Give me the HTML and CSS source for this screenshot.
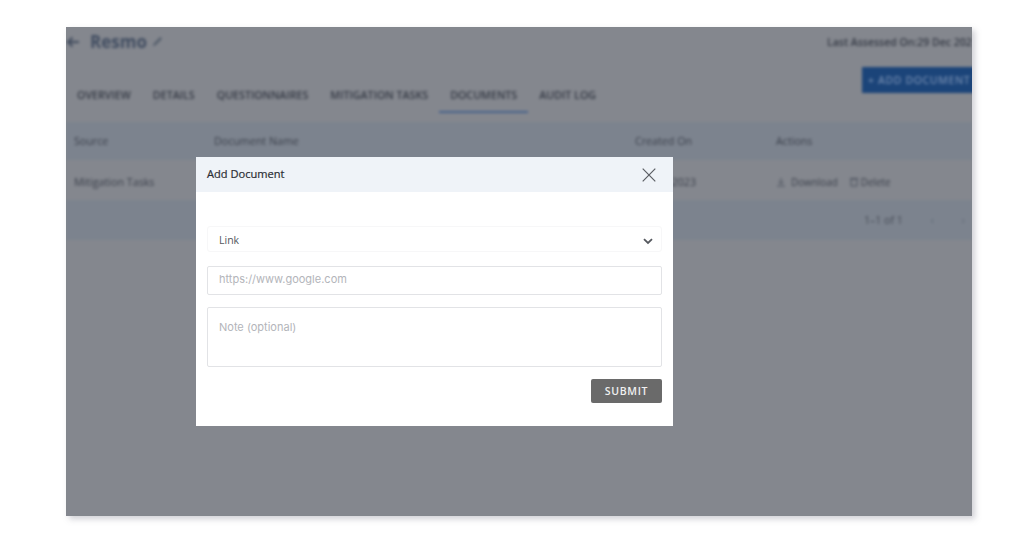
FILE: index.html
```html
<!DOCTYPE html>
<html lang="en">
<head>
<meta charset="utf-8">
<title>Add Document</title>
<link rel="stylesheet" href="styles.css">
</head>
<body>
<main class="frame">
  <div class="page">
    <header class="top">
      <div class="title-group">
        <svg class="back" viewBox="0 0 14 12" width="14" height="12"><path d="M13 6H2M6.500 1.500 2 6l4.500 4.500" fill="none" stroke="#3f4a5c" stroke-width="1.800"/></svg>
        <h1 class="title">Resmo</h1>
        <svg class="edit" viewBox="0 0 12 12" width="11" height="11"><path d="M1.500 10.500 3 8l6-6 1 1-6 6z" fill="none" stroke="#4f5968" stroke-width="1.200"/></svg>
      </div>
      <div class="assessed">Last Assessed On:29 Dec 2023</div>
    </header>
    <div class="tabs-row">
      <nav class="tabs">
        <span class="tab">OVERVIEW</span>
        <span class="tab">DETAILS</span>
        <span class="tab">QUESTIONNAIRES</span>
        <span class="tab">MITIGATION TASKS</span>
        <span class="tab tab-active">DOCUMENTS</span>
        <span class="tab">AUDIT LOG</span>
      </nav>
      <button class="add-btn">+ ADD DOCUMENT</button>
    </div>
    <section class="table">
      <div class="row row-head">
        <span class="c1">Source</span><span class="c2">Document Name</span><span class="c3">Created On</span><span class="c4">Actions</span>
      </div>
      <div class="row row-body">
        <span class="c1">Mitigation Tasks</span><span class="c2"></span><span class="c3">29 Dec 2023</span>
        <span class="c4 actions">
          <span class="action">
            <svg viewBox="0 0 10 10" width="10" height="10"><path d="M5 1v6M2.500 4.500 5 7l2.500-2.500M1 9h8" fill="none" stroke="#4a505c" stroke-width="1"/></svg>Download
          </span>
          <span class="action action-delete">
            <svg viewBox="0 0 8 10" width="8" height="10"><path d="M1 2h6v7H1zM0 1.500h8" fill="none" stroke="#4a505c" stroke-width="1"/></svg>Delete
          </span>
        </span>
      </div>
      <div class="row-foot"><span>1–1 of 1</span><span class="pager">‹</span><span class="pager">›</span></div>
    </section>
  </div>
  <div class="modal" role="dialog">
    <div class="modal-head">
      <h2 class="modal-title">Add Document</h2>
      <svg class="close" viewBox="0 0 14 14" width="14" height="14"><path d="M.7.700 13.300 13.300M13.300.700.700 13.300" fill="none" stroke="#5a5d63" stroke-width="1.200"/></svg>
    </div>
    <form class="modal-body">
      <div class="select">
        <span>Link</span>
        <svg viewBox="0 0 10 7" width="10" height="7"><path d="M1 1.200 5 5l4-3.800" fill="none" stroke="#55585e" stroke-width="1.800"/></svg>
      </div>
      <div class="field field-url">https://www.google.com</div>
      <div class="field field-note">Note (optional)</div>
      <div class="submit-row"><button type="button" class="submit">SUBMIT</button></div>
    </form>
  </div>
</main>
</body>
</html>
```
FILE: styles.css
```css
* { box-sizing: border-box; }
html, body { margin: 0; height: 100%; background: #fff; overflow: hidden; }
body { padding: 27px 52px 0 66px; font-family: "Open Sans", "Liberation Sans", sans-serif; }

.frame {
  position: relative;
  width: 906px;
  height: 489px;
  background: #84878e;
  box-shadow: 3px 3px 6px rgba(120, 120, 135, .35);
  overflow: hidden;
}
.page {
  height: 100%;
  background: #84878e;
  filter: blur(1.4px);
  color: #3a3f4a;
  font-size: 10.500px;
}
.top {
  height: 29px;
  display: flex;
  align-items: center;
  justify-content: space-between;
  white-space: nowrap;
}
.title-group { display: flex; align-items: center; }
.title { margin: 0 5px 0 10px; font-size: 17px; font-weight: 700; color: #414d61; }
.assessed { width: 145px; overflow: hidden; font-size: 10.500px; font-weight: 600; color: #353a45; }

.tabs-row { position: relative; height: 66px; }
.tabs {
  position: absolute;
  left: 0;
  top: 20px;
  display: flex;
  white-space: nowrap;
  font-size: 10.700px;
  font-weight: 600;
  color: #353a45;
}
.tab { height: 37px; padding: 12px 11px 0; }
.tab-active { border-bottom: 2px solid #46618a; }
.add-btn {
  position: absolute;
  left: 796px;
  top: 11px;
  width: 130px;
  height: 26px;
  padding: 0 0 0 6px;
  border: 0;
  background: #1b4479;
  color: #6f88ad;
  font: 600 10.500px "Open Sans", sans-serif;
  letter-spacing: .6px;
  text-align: left;
  white-space: nowrap;
}

.table { font-size: 10.700px; }
.row { height: 40px; display: grid; grid-template-columns: 140px 421px 141px 1fr; align-items: center; padding-left: 8px; white-space: nowrap; }
.row-head { height: 38px; background: #7c838e; }
.row-body { background: #84878e; padding-top: 4px; }
.actions { display: flex; gap: 12px; font-size: 9.900px; }
.action { display: flex; align-items: center; gap: 5px; }
.action-delete { gap: 3px; }
.row-foot {
  height: 40px;
  background: #7c838e;
  display: flex;
  align-items: center;
  justify-content: flex-end;
  gap: 28px;
  padding-right: 7px;
  font-size: 10.500px;
  color: #454a55;
}
.pager { color: #5f6875; }

.modal {
  position: absolute;
  left: 130px;
  top: 130px;
  width: 477px;
  height: 269px;
  background: #fff;
  color: #44474d;
}
.modal-head {
  height: 35px;
  padding: 0 17px 2px 11px;
  background: #eff3f8;
  display: flex;
  align-items: center;
  justify-content: space-between;
}
.close { margin-top: 2px; }
.modal-title { margin: 0; font-size: 11.100px; font-weight: 400; color: #2a2d33; -webkit-text-stroke: .2px #2a2d33; }
.modal-body { padding: 34px 11px 0; display: flex; flex-direction: column; }
.select {
  height: 26px;
  border: 1px solid #f7f7f8;
  border-radius: 3px;
  padding: 1px 8px 0 11px;
  display: flex;
  align-items: center;
  justify-content: space-between;
  font-size: 10.500px;
  color: #55585e;
}
.select svg { margin-top: 3px; }
.field {
  border: 1px solid #e2e3e6;
  border-radius: 2px;
  padding: 0 11px;
  font-family: "Inter", "Roboto", sans-serif;
  font-size: 11px;
  color: #b3b5ba;
}
.field-url { height: 29px; margin-top: 14px; line-height: 25px; }
.field-note { height: 60px; margin-top: 12px; padding-top: 11px; line-height: 16px; }
.submit-row { display: flex; justify-content: flex-end; margin-top: 12px; }
.submit {
  width: 71px;
  height: 24px;
  border: 0;
  border-radius: 2px;
  background: #6a6a6a;
  color: #f0f0f0;
  font: 600 10.500px "Open Sans", sans-serif;
  letter-spacing: .7px;
  padding: 0;
}
```
